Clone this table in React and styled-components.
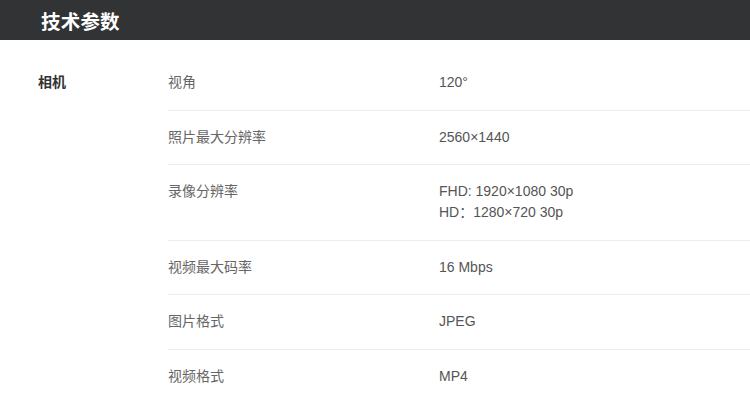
import React from "react";
import styled, { createGlobalStyle } from "styled-components";

const GlobalStyle = createGlobalStyle`
  body {
    margin: 0;
    background: #fff;
    font-family: "Liberation Sans", "Noto Sans CJK SC", sans-serif;
  }
`;

const Header = styled.div`
  height: 40px;
  background: #323335;
  display: flex;
  align-items: center;
  padding-left: 41px;
`;

const Title = styled.h2`
  margin: 0;
  color: #fff;
  font-size: 19.5px;
  font-weight: 700;
  letter-spacing: 0.2px;
`;

const Section = styled.div`
  display: flex;
  padding-top: 16px;
`;

const Category = styled.div`
  width: 130px;
  padding: 16px 0 0 38px;
  font-size: 14px;
  line-height: 21px;
  font-weight: 700;
  color: #333;
`;

const List = styled.div`
  flex: 1;
`;

const Row = styled.div`
  display: flex;
  padding: 16px 0 16.5px;
  border-bottom: ${(p) => (p.last ? "none" : "1px solid #ececec")};
  font-size: 14px;
  line-height: 21px;
`;

const Label = styled.div`
  width: 271px;
  color: #666;
`;

const Value = styled.div`
  color: #555;
`;

const specs = [
  { label: "视角", value: ["120°"] },
  { label: "照片最大分辨率", value: ["2560×1440"] },
  { label: "录像分辨率", value: ["FHD: 1920×1080 30p", "HD：1280×720 30p"] },
  { label: "视频最大码率", value: ["16 Mbps"] },
  { label: "图片格式", value: ["JPEG"] },
  { label: "视频格式", value: ["MP4"] },
];

function App() {
  return (
    <>
      <GlobalStyle />
      <Header>
        <Title>技术参数</Title>
      </Header>
      <Section>
        <Category>相机</Category>
        <List>
          {specs.map((s, i) => (
            <Row key={s.label} last={i === specs.length - 1}>
              <Label>{s.label}</Label>
              <Value>
                {s.value.map((v) => (
                  <div key={v}>{v}</div>
                ))}
              </Value>
            </Row>
          ))}
        </List>
      </Section>
    </>
  );
}

export default App;
